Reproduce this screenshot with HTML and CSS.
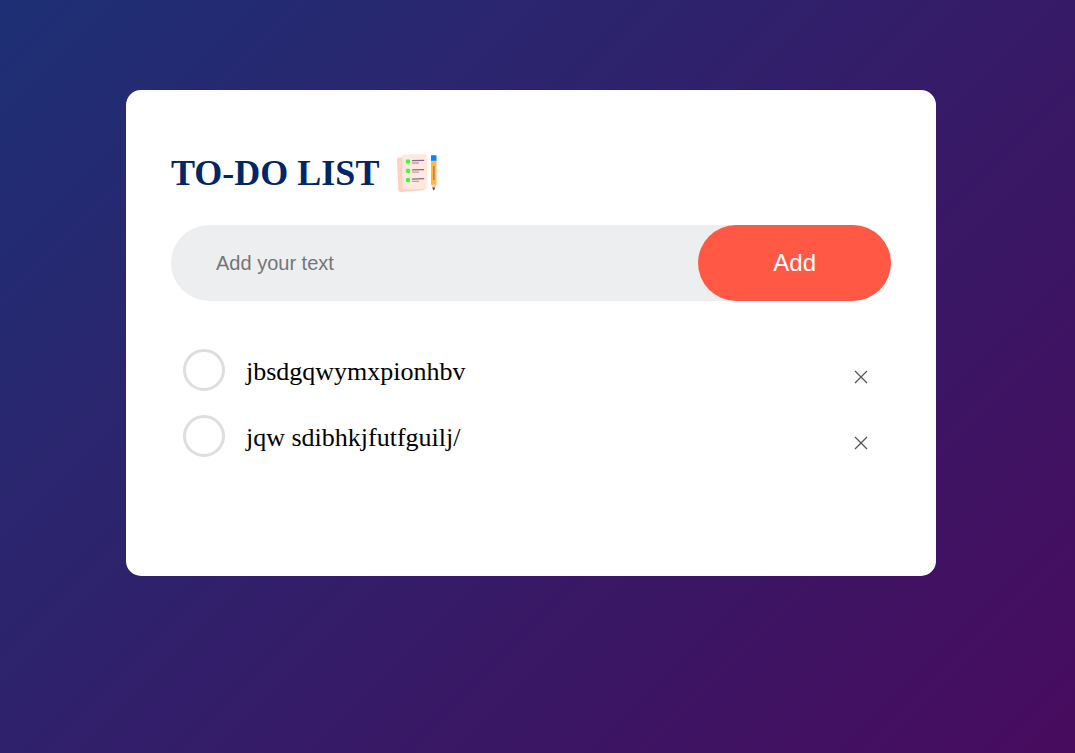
FILE: index.html
```html
<!DOCTYPE html>
<html lang="en">
<head>
  <meta charset="utf-8">
  <meta name="viewport" content="width=device-width, initial-scale=1">
  <title>To-Do List</title>
  <link rel="stylesheet" href="styles.css">
</head>
<body>
  <main class="page">
    <section class="todo">
      <h1 class="title">TO-DO LIST
        <svg class="title-icon" viewBox="0 0 45 45" aria-hidden="true">
          <path fill="#ffd0c2" d="M3 8Q3 6.500 5 6.500L27 5 31 38Q31 39 29 39.200L7 41Q4.500 41 4.300 39Z"/>
          <path fill="#ffe9de" d="M10 3.500 31 3Q33 3 33 5L33.500 36Q33.500 38 31.500 38L10.500 38.500Q8.500 38.500 8.500 36.500L8.300 5.500Q8.300 3.700 10 3.500Z"/>
          <g fill="#3f3"><circle cx="14" cy="10.500" r="2.300"/><circle cx="14" cy="19.700" r="2.300"/><circle cx="14" cy="29" r="2.300"/></g>
          <path stroke="#8a6690" stroke-width="1.200" stroke-linecap="round" d="M18.500 9.700 29.700 9.400M18.500 18.900 29.700 18.600M18.500 28.200 29.700 27.700"/>
          <path stroke="#bda0b2" stroke-width="1.300" stroke-linecap="round" d="M18.500 12H24.500M18.500 21.200H24.500M18.500 30.400H24.500"/>
          <path fill="#ffb74d" d="M37 9H42.500V34H37Z"/>
          <path fill="#0086ff" d="M37 4.800Q37 4.300 37.500 4.300H42Q42.500 4.300 42.500 4.800V9.700H37Z"/>
          <path stroke="#b98143" stroke-width="1.500" d="M39.800 15V29"/>
          <path fill="#ffc9c4" d="M37 33.500H42.500L40.800 38H38.700Z"/>
          <path fill="#544050" d="M38.300 36.400H41.200L40.100 39.200H39.400Z"/>
        </svg>
      </h1>
      <form class="entry">
        <input class="entry-text" type="text" placeholder="Add your text" aria-label="Add your text">
        <button class="entry-add" type="button">Add</button>
      </form>
      <ul class="tasks">
        <li class="task">
          <label class="task-label"><input class="task-check" type="checkbox"><span class="task-text">jbsdgqwymxpionhbv</span></label>
          <button class="task-remove" type="button" aria-label="Remove jbsdgqwymxpionhbv">
            <svg class="cross" viewBox="0 0 14 14" aria-hidden="true"><path d="M1 1 13 13M13 1 1 13"/></svg>
          </button>
        </li>
        <li class="task">
          <label class="task-label"><input class="task-check" type="checkbox"><span class="task-text">jqw sdibhkjfutfguilj/</span></label>
          <button class="task-remove" type="button" aria-label="Remove jqw sdibhkjfutfguilj/">
            <svg class="cross" viewBox="0 0 14 14" aria-hidden="true"><path d="M1 1 13 13M13 1 1 13"/></svg>
          </button>
        </li>
      </ul>
    </section>
  </main>
</body>
</html>
```
FILE: styles.css
```css
* {
  box-sizing: border-box;
  margin: 0;
  padding: 0;
}

body {
  font-family: "Liberation Serif", "Times New Roman", serif;
}

.page {
  min-height: 100vh;
  padding: 90px 28px 90px 15px;
  background: linear-gradient(135deg, #1e3075, #480b5e);
}

.todo {
  max-width: 810px;
  margin: 0 auto;
  padding: 60px 45px 107px;
  border-radius: 15px;
  background: #fff;
}

.title {
  display: flex;
  align-items: center;
  gap: 15px;
  margin-bottom: 28px;
  font-size: 36px;
  line-height: 47px;
  color: #002765;
}

.title-icon {
  width: 45px;
  height: 45px;
}

.entry {
  display: flex;
  margin-bottom: 36px;
  border-radius: 38px;
  background: #edeef0;
}

.entry-text {
  flex: 1;
  min-width: 0;
  padding: 0 15px 0 45px;
  border: none;
  outline: none;
  background: transparent;
  font: 20px "Liberation Sans", Arial, sans-serif;
}

.entry-text::placeholder {
  color: #757575;
}

.entry-add {
  padding: 24px 75px;
  border: none;
  border-radius: 38px;
  background: #ff5945;
  color: #fff;
  font: 24px/28px "Liberation Sans", Arial, sans-serif;
  cursor: pointer;
}

.tasks {
  list-style: none;
}

.task {
  display: flex;
  align-items: center;
  height: 66px;
  padding: 0 12px;
}

.task-label {
  display: flex;
  flex: 1;
  align-items: center;
  gap: 21px;
  cursor: pointer;
}

.task-check {
  appearance: none;
  width: 42px;
  height: 42px;
  border: 3px solid #dedede;
  border-radius: 50%;
}

.task-check:checked {
  border-color: #ff5945;
  background: #ff5945;
}

.task-text {
  padding-top: 4px;
  font-size: 26px;
  line-height: 30px;
}

.task-remove {
  display: flex;
  padding: 21px 11px 8px;
  border: none;
  background: transparent;
  color: #555;
  cursor: pointer;
}

.cross {
  width: 14px;
  height: 14px;
  fill: none;
  stroke: currentColor;
  stroke-width: 1.3;
}
```
